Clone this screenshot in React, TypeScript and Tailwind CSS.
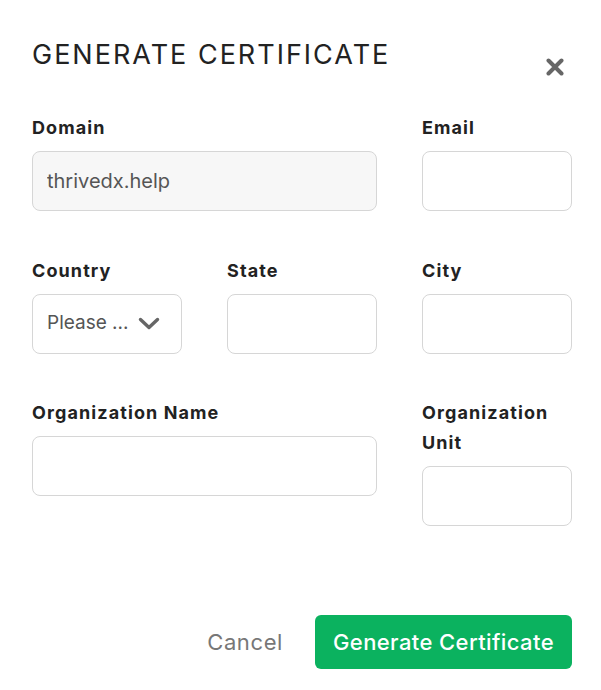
import React from 'react';

const font = { fontFamily: 'Inter, "Noto Sans", sans-serif' };

function Field({ label, className, children }: { label: React.ReactNode; className?: string; children: React.ReactNode }) {
  return (
    <div className={`flex flex-col ${className ?? ''}`}>
      <label className="text-[18px] font-bold leading-[30px] tracking-[1.1px] text-[#222] mb-[8px]">{label}</label>
      {children}
    </div>
  );
}

function TextBox({ value, disabled }: { value?: string; disabled?: boolean }) {
  return (
    <input
      readOnly
      value={value ?? ''}
      className={`h-[60px] w-full rounded-[8px] border border-[#d6d6d6] px-[14px] text-[20px] text-[#555] outline-none ${
        disabled ? 'bg-[#f7f7f7]' : 'bg-white'
      }`}
    />
  );
}

export default function App() {
  return (
    <div className="min-h-[690px] w-[601px] bg-white pl-[32px] pr-[29px] pt-[38px]" style={font}>
      <div className="flex items-start justify-between">
        <h2 className="text-[27px] font-normal leading-[34px] tracking-[2px] text-[#222]">GENERATE CERTIFICATE</h2>
        <button className="mt-[20px] mr-[8px] text-[#666]" aria-label="Close">
          <svg width="18" height="18" viewBox="0 0 18 18">
            <path d="M2.5 2.5 L15.5 15.5 M15.5 2.5 L2.5 15.5" stroke="currentColor" strokeWidth="4" strokeLinecap="round" />
          </svg>
        </button>
      </div>

      <div className="mt-[37px] grid grid-cols-[150px_150px_150px] gap-x-[45px] gap-y-[44.5px] items-start">
        <Field label="Domain" className="col-span-2">
          <TextBox value="thrivedx.help" disabled />
        </Field>
        <Field label="Email">
          <TextBox />
        </Field>

        <Field label="Country">
          <div className="flex h-[60px] items-center justify-between rounded-[8px] border border-[#d6d6d6] bg-white pl-[14px] pr-[21px]">
            <span className="text-[19px] text-[#555]">Please ...</span>
            <svg width="22" height="13" viewBox="0 0 22 13">
              <path d="M2.5 2.5 L11 10.5 L19.5 2.5" fill="none" stroke="#666" strokeWidth="3.4" strokeLinecap="round" strokeLinejoin="round" />
            </svg>
          </div>
        </Field>
        <Field label="State">
          <TextBox />
        </Field>
        <Field label="City">
          <TextBox />
        </Field>

        <Field label="Organization Name" className="col-span-2">
          <TextBox />
        </Field>
        <Field label={<>Organization<br />Unit</>}>
          <TextBox />
        </Field>
      </div>

      <div className="mt-[89px] flex items-center justify-end gap-[32px]">
        <button className="text-[22px] tracking-[0.6px] text-[#777]">Cancel</button>
        <button className="h-[54px] w-[257px] rounded-[6px] bg-[#0bb25f] text-[22px] font-medium tracking-[0.4px] text-white">
          Generate Certificate
        </button>
      </div>
    </div>
  );
}
